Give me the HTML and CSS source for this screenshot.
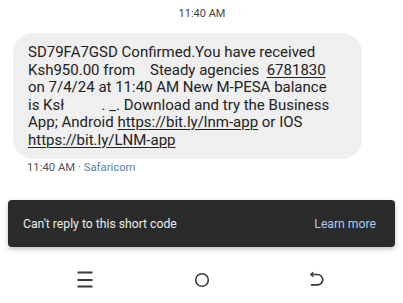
FILE: index.html
```html
<!DOCTYPE html>
<html>
<head>
<meta charset="utf-8">
<link rel="stylesheet" href="styles.css">
</head>
<body>
<div class="screen">
  <div class="day-time">11:40 AM</div>
  <div class="bubble">
    <p class="msg">SD79FA7GSD Confirmed.You have received<br>Ksh950.00 from    Steady agencies  <span class="link">6781830</span><br>on 7/4/24 at 11:40 AM New M-PESA balance<br>is Ksł          . _. Download and try the Business<br>App; Android <span class="link">https://bit.ly/lnm-app</span> or IOS<br><span class="link">https://bit.ly/LNM-app</span></p>
  </div>
  <div class="meta">11:40 AM · <span class="sender">Safaricom</span></div>
  <div class="snackbar">
    <span class="snack-text">Can't reply to this short code</span>
    <span class="snack-action">Learn more</span>
  </div>
  <nav class="navbar">
    <svg class="nav-icon" width="20" height="20" viewBox="0 0 20 20"><path d="M2.5 2.5h15M2.5 10h15M2.5 16.5h15" stroke="#3a3a3a" stroke-width="1.8" fill="none"/></svg>
    <svg class="nav-icon" width="20" height="20" viewBox="0 0 20 20"><circle cx="10" cy="10" r="6.3" stroke="#3a3a3a" stroke-width="1.6" fill="none"/></svg>
    <svg class="nav-icon" width="20" height="20" viewBox="0 0 20 20"><path d="M3 4.5h6.5a5.2 5.2 0 0 1 0 10.4H3" stroke="#3a3a3a" stroke-width="1.7" fill="none"/><path d="M5.3 2.3L3 4.5l2.3 2.2" stroke="#3a3a3a" stroke-width="1.5" fill="none"/></svg>
  </nav>
</div>
</body>
</html>
```
FILE: styles.css
```css
html, body {
  margin: 0;
  padding: 0;
  background: #ffffff;
}
body {
  font-family: Roboto, "Liberation Sans", sans-serif;
  color: #222;
}
.screen {
  width: 403px;
  height: 303px;
  overflow: hidden;
  padding-top: 7px;
  box-sizing: border-box;
}
.day-time {
  text-align: center;
  font-size: 11px;
  line-height: 14px;
  color: #444;
  padding-left: 1px;
}
.bubble {
  margin: 12px 0 0 13px;
  width: 349px;
  height: 126px;
  box-sizing: border-box;
  background: #efefef;
  border-radius: 20px;
  padding: 11px 0 0 15px;
}
.msg {
  margin: 0;
  font-size: 15px;
  line-height: 17.5px;
  white-space: pre;
  color: #222;
}
.link {
  text-decoration: underline;
  text-decoration-thickness: 1px;
  text-underline-offset: 2px;
}
.meta {
  margin: 2px 0 0 27px;
  font-size: 11.3px;
  line-height: 14px;
  color: #555;
}
.sender {
  color: #5a7fae;
}
.snackbar {
  margin: 25px 0 0 8px;
  width: 387px;
  height: 47px;
  box-sizing: border-box;
  background: #2b2b2b;
  border-radius: 4px;
  box-shadow: 0 2px 5px rgba(0,0,0,0.25);
  display: flex;
  align-items: center;
  justify-content: space-between;
  padding: 0 19px 0 15px;
  font-size: 12.2px;
}
.snack-text {
  color: #ececec;
}
.snack-action {
  color: #b3c8ef;
}
.navbar {
  margin-top: 23px;
  display: flex;
  justify-content: space-between;
  padding: 0 75px 0 75px;
  height: 20px;
}
.nav-icon {
  display: block;
}
```
